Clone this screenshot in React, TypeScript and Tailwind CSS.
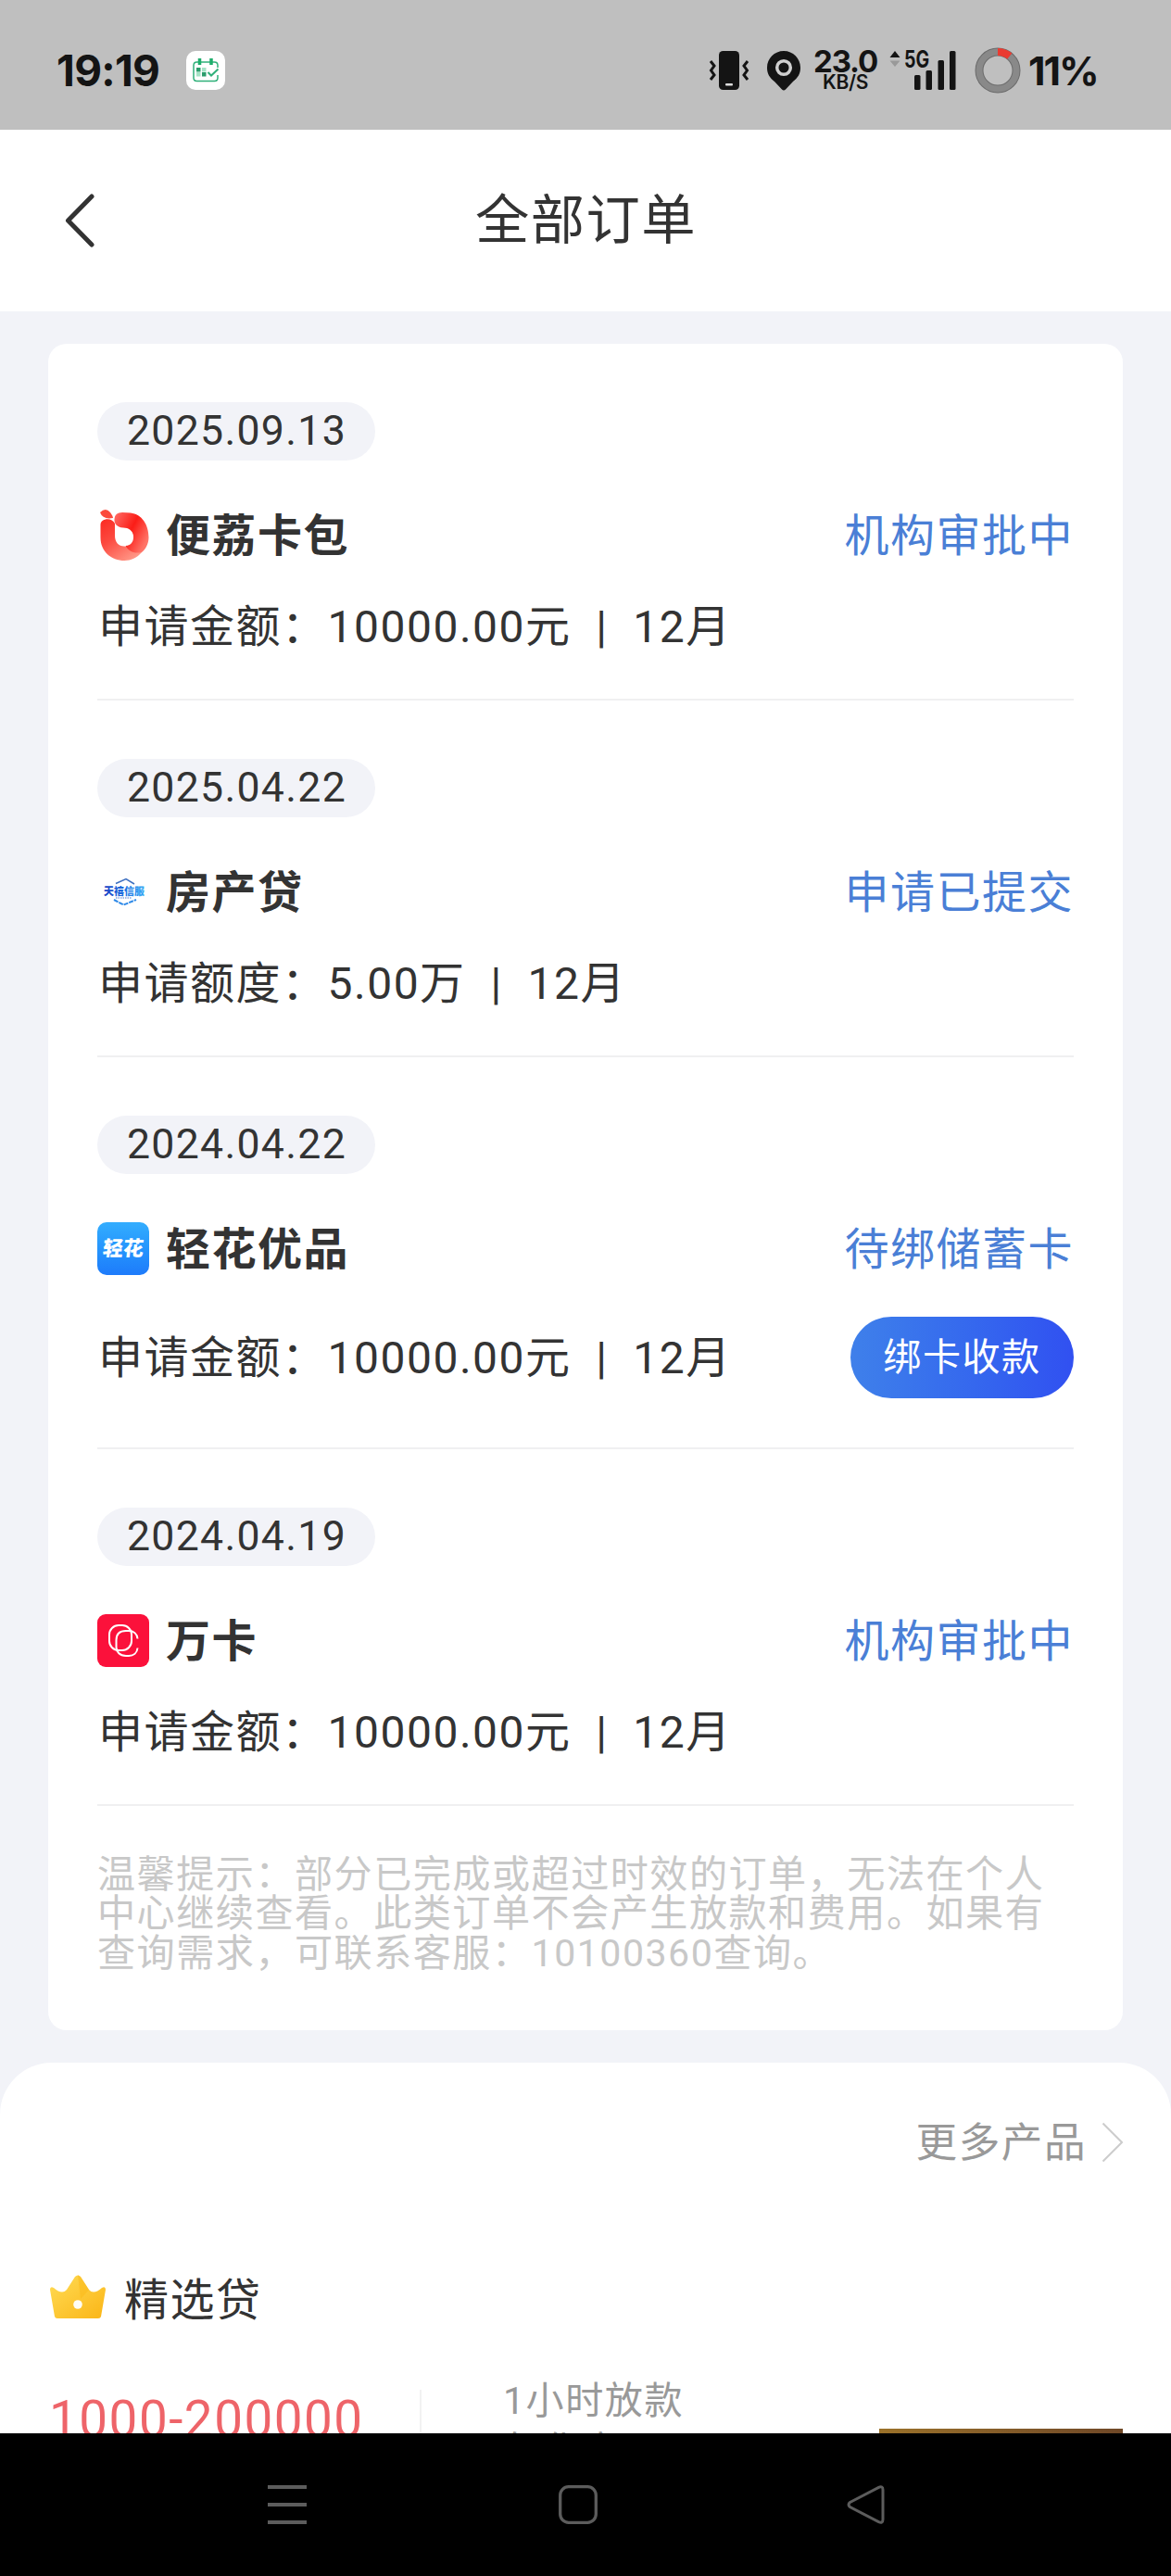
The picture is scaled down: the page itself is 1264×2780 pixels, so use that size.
import type { ReactNode } from "react";

type Order = {
  date: string;
  name: string;
  logo: ReactNode;
  status: string;
  label: string;
  amount: string;
  term: string;
  action?: string;
};

function LiziLogo() {
  return (
    <svg viewBox="0 0 56 57" className="h-[57px] w-14">
      <defs>
        <linearGradient id="lz-left" x1="0" y1="0" x2="0.7" y2="1">
          <stop offset="0" stopColor="#fb2a22" />
          <stop offset="0.45" stopColor="#fc4a40" />
          <stop offset="1" stopColor="#ff9585" />
        </linearGradient>
        <linearGradient id="lz-right" x1="0" y1="0" x2="1" y2="0.6">
          <stop offset="0" stopColor="#ff6f68" />
          <stop offset="0.55" stopColor="#fb1d17" />
          <stop offset="1" stopColor="#ff7468" />
        </linearGradient>
      </defs>
      <path
        d="M3.500 17 C4 10 16 9 19 16 L19 29 C19 36 23 40.500 29 40.500 C35 40.500 38 47 48 47 C43 53 36 56 29.500 56 C15 56 3.500 46 3.500 31 Z"
        fill="url(#lz-left)"
      />
      <path
        d="M18.500 11 Q19 4 27 4 L36 4.500 C48 6 55.500 17 55.500 31 C55.500 38 52 44 48 47 C40 49 34 46 30.500 40 C37 39.500 39.500 35 39 29 C38 23.500 34 20.500 28 20.500 C21 20 18 16 18.500 11 Z"
        fill="url(#lz-right)"
      />
      <path d="M3 4 Q9-2 14 4 Q17 8 17 10 Q6 12 3 4Z" fill="#fb4a3c" />
    </svg>
  );
}

function TianxiLogo() {
  return (
    <svg viewBox="0 0 56 57" className="h-[57px] w-14 tracking-normal">
      <defs>
        <linearGradient id="tx" x1="0" y1="0" x2="1" y2="0">
          <stop offset="0" stopColor="#1b3fc4" />
          <stop offset="0.5" stopColor="#1c6fe0" />
          <stop offset="1" stopColor="#35a8f5" />
        </linearGradient>
      </defs>
      <path d="M20 19.500 L31 14.500 L40 20" fill="none" stroke="#3d6fc0" strokeWidth="1.5" />
      <path d="M18 37 L28.500 42.500 L42 37" fill="none" stroke="#2f8ae8" strokeWidth="2" strokeDasharray="5 1" />
      <path d="M20 35 H37" stroke="#4a7ad0" strokeWidth="1.2" strokeDasharray="1.5 1" />
      <text
        x="7"
        y="31.500"
        fontSize="11"
        fontWeight="900"
        fontFamily="'Noto Sans CJK SC', sans-serif"
        fill="url(#tx)"
      >
        天禧信服
      </text>
    </svg>
  );
}

function QinghuaLogo() {
  return (
    <span className="flex h-[57px] w-14 items-center justify-center rounded-[10px] bg-linear-to-b from-[#33adfe] to-[#1e7bfb]">
      <span className="-skew-x-6 text-[22px] leading-none font-black tracking-normal text-white">轻花</span>
    </span>
  );
}

function WankaLogo() {
  return (
    <svg viewBox="0 0 56 57" className="h-[57px] w-14">
      <rect width="56" height="57" rx="9" fill="#fb113b" />
      <g fill="none" stroke="#fff" strokeWidth="2">
        <rect x="13" y="12" width="24" height="27" rx="10" />
        <path d="M43.500 26.500 C43 21 39 18 34 18 H31 C24 18 20.500 22 20.500 28 V35 C20.500 41 24.500 45 31 45 H34 C39 45 43 42 43.500 36.500" />
      </g>
    </svg>
  );
}

const orders: Order[] = [
  {
    date: "2025.09.13",
    name: "便荔卡包",
    logo: <LiziLogo />,
    status: "机构审批中",
    label: "申请金额：",
    amount: "10000.00元",
    term: "12月",
  },
  {
    date: "2025.04.22",
    name: "房产贷",
    logo: <TianxiLogo />,
    status: "申请已提交",
    label: "申请额度：",
    amount: "5.00万",
    term: "12月",
  },
  {
    date: "2024.04.22",
    name: "轻花优品",
    logo: <QinghuaLogo />,
    status: "待绑储蓄卡",
    label: "申请金额：",
    amount: "10000.00元",
    term: "12月",
    action: "绑卡收款",
  },
  {
    date: "2024.04.19",
    name: "万卡",
    logo: <WankaLogo />,
    status: "机构审批中",
    label: "申请金额：",
    amount: "10000.00元",
    term: "12月",
  },
];

function StatusBar() {
  return (
    <div className="flex h-[140px] shrink-0 items-center bg-[#bfbfbf] pt-3 pr-[78px] pl-[61px] font-['Inter','Noto_Sans_CJK_SC',sans-serif] tracking-normal text-[#141414]">
      <span className="w-[113px] text-[46px] leading-none font-bold tracking-[-0.7px]">19:19</span>
      <svg viewBox="0 0 42 42" className="ml-[27px] size-[42px]">
        <rect width="42" height="42" rx="10" fill="#fff" />
        <path
          d="M34 18 V15.500 Q34 12 30.500 12 H11.500 Q8 12 8 15.500 V29 Q8 32.500 11.500 32.500 H30.500 Q34 32.500 34 29 V26"
          fill="none"
          stroke="#2fb079"
          strokeWidth="1.5"
        />
        <path d="M14.500 8 V15 M27 8 V15" stroke="#1fae6c" strokeWidth="3.5" />
        <path d="M11 18 h4.500 v4.500 h-4.500z M17 23 h4.500 v4.500 h-4.500z" fill="#2b9d6c" />
        <path d="M17 18 h4.500 v4.500 h-4.500z M11 23 h4.500 v4.500 h-4.500z" fill="#a5e3c6" />
        <path d="M23.500 23 L27 26.500 L34.500 19.500" fill="none" stroke="#2fb079" strokeWidth="2" />
      </svg>
      <svg viewBox="0 0 44 42" className="ml-auto h-[42px] w-11">
        <rect x="11" width="22" height="42" rx="4.500" fill="#141414" />
        <rect x="18" y="35" width="8" height="2.500" rx="1" fill="#ddd" />
        <path
          d="M2 11 L6 16 L2.500 21 L6 26 L2 31 M42 11 L38 16 L41.500 21 L38 26 L42 31"
          fill="none"
          stroke="#141414"
          strokeWidth="3"
        />
      </svg>
      <svg viewBox="0 0 36 43" className="ml-[19px] h-[43px] w-9">
        <path d="M18 0 C28 0 36 8 36 18 C36 25 33 29 28 33 L20 41.500 Q18 43.500 16 41.500 L8 33 C3 29 0 25 0 18 C0 8 8 0 18 0Z" fill="#141414" />
        <circle cx="18" cy="18" r="7.300" fill="none" stroke="#cfcfcf" strokeWidth="3.500" />
      </svg>
      <div className="ml-[13px] flex w-[71px] flex-col items-center font-bold">
        <span className="text-[33px] leading-[25px] tracking-[-1.2px]">23.0</span>
        <span className="text-[21px] leading-[19px] font-semibold tracking-[-0.3px]">KB/S</span>
      </div>
      <div className="relative ml-[12px] h-[42px] w-[72px]">
        <svg viewBox="0 0 72 42" className="h-[42px] w-[72px]">
          <path d="M0.500 7 L6 0 L11.500 7Z" fill="#141414" />
          <path d="M0.500 10.500 L6 17 L11.500 10.500Z" fill="#999" />
          <g fill="#141414">
            <rect x="27" y="26" width="6.500" height="16" rx="1.500" />
            <rect x="39.500" y="21" width="6.500" height="21" rx="1.500" />
            <rect x="52.500" y="10" width="6.500" height="32" rx="1.500" />
            <rect x="65" y="0" width="6.500" height="42" rx="1.500" />
          </g>
        </svg>
        <span className="absolute top-[-3px] left-4 origin-left scale-x-78 text-[25px] leading-none font-bold">5G</span>
      </div>
      <svg viewBox="0 0 50 50" className="ml-5 size-[50px]">
        <circle cx="25" cy="25" r="20" fill="none" stroke="#6c6c6c" strokeWidth="9" />
        <circle cx="25" cy="25" r="20" fill="none" stroke="#898989" strokeWidth="7" />
        <path d="M25 5 A20 20 0 0 1 37.750 9.600" fill="none" stroke="#ea3b31" strokeWidth="8" />
      </svg>
      <span className="ml-2 w-[76px] text-[43px] leading-none font-bold tracking-[-2px]">11%</span>
    </div>
  );
}

function OrderItem({ order }: { order: Order }) {
  return (
    <li className="border-b-2 border-[#f0f0f1] pt-[63px] pb-[51px]">
      <div className="flex h-[63px] w-[300px] items-center rounded-full bg-[#f2f3f8] pl-8 text-[44.6px] tracking-[1.3px]">
        {order.date}
      </div>
      <div className="mt-[52px] flex h-[57px] items-center">
        {order.logo}
        <h2 className="ml-[18px] pt-[3px] font-bold">{order.name}</h2>
        <span className="ml-auto pt-[3px] text-[#4a7fd6]">{order.status}</span>
      </div>
      <div className="mt-[45px] flex min-h-[52px] items-center justify-between">
        <p className="pl-px leading-[50px] whitespace-pre">
          {order.label}
          {order.amount}
          {"  |  "}
          {order.term}
        </p>
        {order.action && (
          <button
            type="button"
            className="mb-0.5 h-[88px] w-[241px] rounded-full bg-linear-to-r from-[#3f80ea] to-[#3150f1] pt-0.5 text-[41.1px] leading-none tracking-[1.5px] text-white"
          >
            {order.action}
          </button>
        )}
      </div>
    </li>
  );
}

function MoreProducts() {
  return (
    <section className="mt-[35px] flex-1 overflow-hidden rounded-t-[56px] bg-white">
      <div className="mt-[60px] flex h-[52px] items-center justify-end pr-[51px] text-[44.6px] text-[#999]">
        <span className="pt-0.5">更多产品</span>
        <svg viewBox="0 0 24 44" className="ml-4 h-11 w-6">
          <path d="M1.500 1.500 L22 22 L1.500 42.500" fill="none" stroke="#ccc" strokeWidth="2" />
        </svg>
      </div>
      <div className="mt-[111px] flex h-[60px] items-center pl-[53px]">
        <svg viewBox="0 0 62 48" className="h-12 w-[62px]">
          <defs>
            <linearGradient id="crown" x1="0" y1="0" x2="1" y2="1">
              <stop offset="0" stopColor="#ffdc55" />
              <stop offset="1" stopColor="#fbb516" />
            </linearGradient>
          </defs>
          <path
            d="M1 16 Q1 12 5 14 Q14 22 19 16 L28 2 Q31-1 34 2 L43 16 Q48 22 57 14 Q61 12 61 16 L56 45 Q55.500 47 53 47 H9 Q6.500 47 6 45 L1 16Z"
            fill="url(#crown)"
          />
          <path d="M31 0 L34 2 L43 16 L34 26 Z" fill="#fbb40f" opacity="0.4" />
          <circle cx="31" cy="32" r="4.800" fill="#fffdf5" />
        </svg>
        <h2 className="ml-[19px] pt-2">精选贷</h2>
      </div>
      <div className="mt-[57px] flex">
        <div className="mt-[13px] w-[402px] pl-[53px] text-[54.8px] leading-[64px] text-[#ee6469]">
          1000-200000
        </div>
        <div className="mt-[13px] ml-[51px] h-24 w-0.5 bg-[#f2f2f2]" />
        <div className="mt-[-2px] ml-[88px] text-[41.1px] leading-[54px] text-[#999]">
          <p>1小时放款</p>
          <p>年化率</p>
        </div>
        <div className="mt-[55px] mr-[52px] ml-auto h-20 w-[263px] bg-linear-to-r from-[#9a7129] to-[#6f4827]" />
      </div>
    </section>
  );
}

function NavBar() {
  return (
    <nav className="flex h-[154px] shrink-0 items-center bg-black pl-[289px]">
      <svg viewBox="0 0 42 42" className="size-[42px]">
        <path d="M0 2 H42 M0 21 H42 M0 40 H42" stroke="#5c5c5c" strokeWidth="3.800" />
      </svg>
      <svg viewBox="0 0 42 42" className="ml-[272px] size-[42px]">
        <rect x="1.700" y="1.700" width="38.600" height="38.600" rx="9" fill="none" stroke="#5c5c5c" strokeWidth="3.300" />
      </svg>
      <svg viewBox="0 0 42 42" className="ml-[269px] size-[42px]">
        <path
          d="M3.500 18.500 L34.500 2.300 Q39 0.500 39 5 V37 Q39 41.500 34.500 39.700 L3.500 23.500 Q0.500 21 3.500 18.500Z"
          fill="none"
          stroke="#5c5c5c"
          strokeWidth="3"
        />
      </svg>
    </nav>
  );
}

export default function App() {
  return (
    <div className="flex h-[2780px] w-[1264px] flex-col overflow-hidden bg-[#f2f3f8] font-['Roboto','Noto_Sans_CJK_SC',sans-serif] text-[48px] leading-none tracking-[1.5px] text-[#333]">
      <StatusBar />
      <header className="flex h-[196px] shrink-0 items-center bg-white pl-[70px]">
        <svg viewBox="0 0 32 58" className="h-[58px] w-8 shrink-0">
          <path d="M29 3 L3.500 29 L29 55" fill="none" stroke="#333" strokeWidth="5" strokeLinecap="round" strokeLinejoin="round" />
        </svg>
        <h1 className="flex-1 pr-[101px] text-center text-[58.3px]">全部订单</h1>
      </header>
      <main className="flex min-h-0 flex-1 flex-col">
        <div className="mx-[52px] mt-[35px] h-[1820px] shrink-0 rounded-[20px] bg-white px-[53px]">
          <ul>
            {orders.map((order) => (
              <OrderItem key={order.date} order={order} />
            ))}
          </ul>
          <p className="mt-[53px] text-[41.1px] leading-[42.4px] text-[#c8c8c8]">
            温馨提示：部分已完成或超过时效的订单，无法在个人中心继续查看。此类订单不会产生放款和费用。如果有查询需求，可联系客服：10100360查询。
          </p>
        </div>
        <MoreProducts />
      </main>
      <NavBar />
    </div>
  );
}
